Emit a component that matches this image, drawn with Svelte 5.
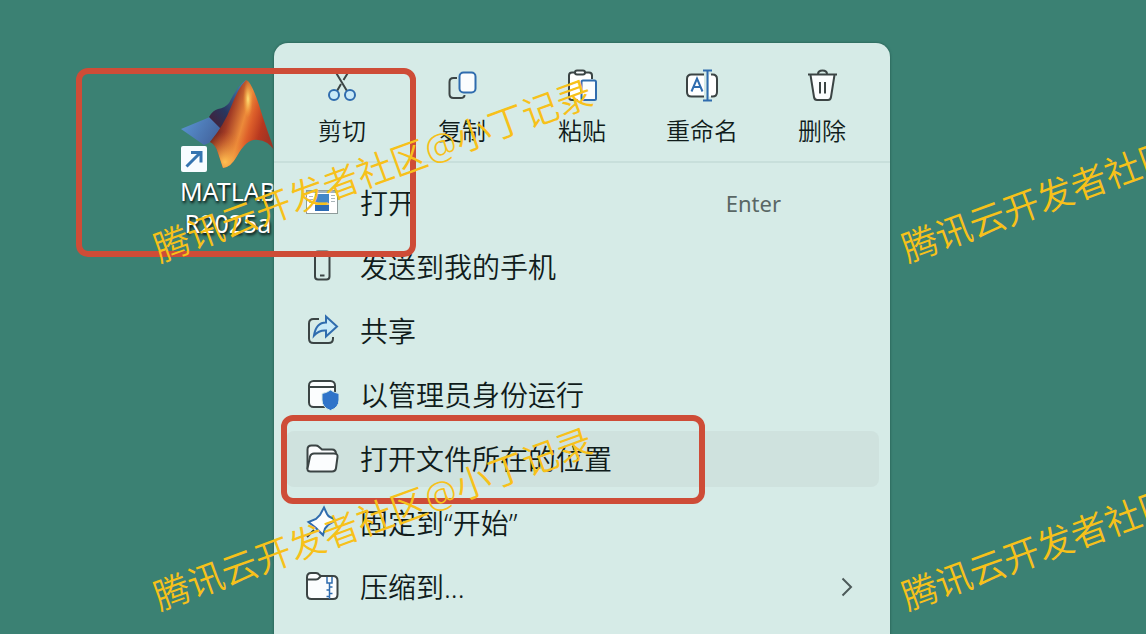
<script>
  const actions = [
    { id: 'cut', label: '剪切' },
    { id: 'copy', label: '复制' },
    { id: 'paste', label: '粘贴' },
    { id: 'rename', label: '重命名' },
    { id: 'delete', label: '删除' }
  ];
  const items = [
    { id: 'open', label: '打开', hint: 'Enter' },
    { id: 'phone', label: '发送到我的手机' },
    { id: 'share', label: '共享' },
    { id: 'admin', label: '以管理员身份运行' },
    { id: 'folder', label: '打开文件所在的位置', active: true },
    { id: 'pin', label: '固定到“开始”' },
    { id: 'zip', label: '压缩到...', submenu: true }
  ];
  const marks = [
    { x: 373, y: 171 },
    { x: 1121, y: 171 },
    { x: 373, y: 519 },
    { x: 1121, y: 519 }
  ];
</script>

{#snippet icon(id)}
  <svg class="icon" viewBox="0 0 36 36" aria-hidden="true">
    {#if id === 'cut'}
      <path d="M11 3 23 23M25 3 19.500 12M17 16 13 23" class="ink" />
      <circle cx="10" cy="27" r="5" class="blue pale" />
      <circle cx="26" cy="27" r="5" class="blue pale" />
    {:else if id === 'copy'}
      <path d="M13 10H9.500q-4 0-4 4v12q0 4 4 4h7q4 0 4-3" class="ink" />
      <rect x="15.500" y="4.500" width="16" height="20" rx="4" class="blue white" />
    {:else if id === 'paste'}
      <path d="M12 5H8.500Q5 5 5 8v22q0 3 3.500 3H27V9q0-4-4-4h-4z" fill="#fff" />
      <path d="M11 4.500H8q-3 0-3 3V29q0 3 3 3h6M21 4.500h4q3 0 3 3V11" class="ink" />
      <rect x="11" y="2.500" width="10" height="4" rx="2" class="ink white" />
      <rect x="17.500" y="12.500" width="14.500" height="19.500" rx="1.500" class="blue white" />
    {:else if id === 'rename'}
      <path d="M20 6.500H7.500q-4.500 0-4.500 4.500v13q0 4.500 4.500 4.500H20zM25 6.500h3.500q4.500 0 4.500 4.500v13q0 4.500-4.500 4.500H25z" fill="#fff" />
      <path d="M20 6.500H7.500Q3 6.500 3 11v13q0 4.500 4.500 4.500H20M27 6.500h1.500Q33 6.500 33 11v13q0 4.500-4.500 4.500H27" class="ink" />
      <path d="m7.500 23.500 5.500-13 5.500 13M9.500 19h7M19 2.500h9M23.500 2.500v30M19 32.500h9" class="blue" />
    {:else if id === 'delete'}
      <path d="m6.500 7 3.500 22q.5 3 3 3h11q2.500 0 3-3L30.500 7" class="ink white" />
      <path d="M4 6.500h29M14 6q0-3.500 4.500-3.500T23 6M16 14v11.500M21 14v11.500" class="ink" />
    {:else if id === 'open'}
      <rect x="2.500" y="5.500" width="31" height="23" fill="#fff" stroke="#8e9c9b" stroke-width="1" />
      <path d="M3 6h30v2H3z" fill="#a3b4bd" />
      <rect x="11" y="9" width="14" height="17" fill="#2d6cb5" />
      <path d="M11 9h14v9H11z" fill="#4387c8" />
      <path d="M11 18h14v2H11z" fill="#e9c36b" />
      <path d="M5 11.500h4M5 14.500h4M5 17.500h4M27 10.500h4M27 13.500h4M27 16.500h4" stroke="#a9b5b8" stroke-width="1" />
    {:else if id === 'phone'}
      <rect x="11" y="2.500" width="14.500" height="28" rx="3" class="ink" />
      <path d="M16 26.500h4.500" class="ink" />
    {:else if id === 'share'}
      <path d="M15 6H9.500Q5 6 5 10.500v15Q5 30 9.500 30h15q4.500 0 4.500-4.500V24" class="ink" />
      <path d="M22 3.500v6Q12 9.500 10 22.500q5-5.500 12-5v6L33 13.500z" class="blue pale" />
    {:else if id === 'admin'}
      <rect x="5" y="4" width="26" height="26" rx="4.500" class="ink white" />
      <path d="M5 10h26" class="ink" />
      <path d="M26.500 13q4 3 8.500 3.500V23q0 7.500-8.500 10.500Q18 30.500 18 23v-6.500q4.500-.5 8.500-3.500z" fill="#2f74c9" stroke="#d6ece8" stroke-width="1" />
    {:else if id === 'folder'}
      <path d="M3.500 28V8.500q0-4 4-4h4q2 0 3 1L18 8.500h10q4 0 4 4.500" class="ink white" />
      <path d="M10 12.500h20q4 0 3.500 3.500L32 27q-.5 3.500-4 3.500H6.500q-3.500 0-3-3L6 15.500q1-3 4-3z" class="ink white" />
    {:else if id === 'pin'}
      <path d="m20 2.500 3 6.500q1 2 3 3l6 3-8 5-3 3.500-2 6.500q-3-3-7-7L4.500 17 12 14l4-4z" class="blue white" />
      <path d="m10 25-7 7" class="ink" />
    {:else if id === 'zip'}
      <path d="M3 8.500Q3 4 7 4h5q2 0 3.500 2L17 7h12q4.500 0 4.500 4.500v14Q33.500 30 29 30H7.500Q3 30 3 25.500z" class="ink white" />
      <path d="M3 10.500h9q2 0 3-1.500l2-2" class="ink" />
      <path d="M23 8v6h5V8M25.500 14v16M25.500 18h3M25.500 21h-3M25.500 24.500h3M25.500 27.500h-3" class="blue zipper" />
    {/if}
  </svg>
{/snippet}

<main class="desktop">
  <button class="shortcut" type="button">
    <svg class="logo" viewBox="0 0 95 90" aria-hidden="true">
      <defs>
        <linearGradient id="wing" x1="0" y1="0" x2="1" y2="0.400">
          <stop offset="0" stop-color="#5b97d6" />
          <stop offset="1" stop-color="#44659f" />
        </linearGradient>
        <linearGradient id="shade" x1="0" y1="1" x2="1" y2="0">
          <stop offset="0" stop-color="#4a1c30" />
          <stop offset="0.400" stop-color="#28365f" />
          <stop offset="1" stop-color="#4a86bf" />
        </linearGradient>
        <linearGradient id="flame" gradientUnits="userSpaceOnUse" x1="38" y1="28" x2="92" y2="44">
          <stop offset="0" stop-color="#5d1a1c" />
          <stop offset="0.220" stop-color="#a03a25" />
          <stop offset="0.480" stop-color="#ec8a3a" />
          <stop offset="0.620" stop-color="#dd5f2a" />
          <stop offset="0.820" stop-color="#b8381f" />
          <stop offset="1" stop-color="#a03424" />
        </linearGradient>
        <radialGradient id="glow" gradientUnits="userSpaceOnUse" cx="44" cy="82" r="30">
          <stop offset="0" stop-color="#ffc052" />
          <stop offset="1" stop-color="#e5742b" stop-opacity="0" />
        </radialGradient>
        <radialGradient id="tip" gradientUnits="userSpaceOnUse" cx="0" cy="0" r="1" gradientTransform="translate(67 19) scale(5 19)">
          <stop offset="0" stop-color="#ffe47a" />
          <stop offset="1" stop-color="#f9a035" stop-opacity="0" />
        </radialGradient>
      </defs>
      <path d="M0 49 29 37 41 48 28 63 23 65Z" fill="url(#wing)" />
      <path d="M28 37q4-7 9-8 7-1 11-6Q57 5 65 0 62 15 53 32L40 49Z" fill="url(#shade)" />
      <path d="M65 0Q57 8 50 27 43 45 29 62q6 3 8 11l5 15q8-1 14-12 10-18 21-16 9 0 17 11Q86 51 78 25 70 1 65 0Z" fill="url(#flame)" />
      <path d="M65 0Q57 8 50 27 43 45 29 62q6 3 8 11l5 15q8-1 14-12 10-18 21-16 9 0 17 11Q86 51 78 25 70 1 65 0Z" fill="url(#glow)" />
      <ellipse cx="67" cy="19" rx="5" ry="18" fill="url(#tip)" />
    </svg>
    <svg class="arrow" viewBox="0 0 26 26" aria-hidden="true">
      <rect width="26" height="26" rx="2" fill="#f7fcff" />
      <path d="M5.500 20.500 19 7M10 6.500h10v10" fill="none" stroke="#3474b0" stroke-width="3" />
    </svg>
    <span>MATLAB<br />R2025a</span>
  </button>

  <section class="menu">
    <div class="actions">
      {#each actions as action}
        <button type="button">
          {@render icon(action.id)}
          <span>{action.label}</span>
        </button>
      {/each}
    </div>
    <div class="items">
      {#each items as item}
        <button type="button" class:active={item.active}>
          {@render icon(item.id)}
          <span class="label">{item.label}</span>
          {#if item.hint}<kbd>{item.hint}</kbd>{/if}
          {#if item.submenu}
            <svg class="chevron" viewBox="0 0 12 20" aria-hidden="true"><path d="m1.500 1.500 8.500 8.500-8.500 8.500" /></svg>
          {/if}
        </button>
      {/each}
    </div>
  </section>

  <div class="frame shortcut-frame"></div>
  <div class="frame item-frame"></div>

  {#each marks as mark}
    <div class="mark" style="left:{mark.x}px;top:{mark.y}px">腾讯云开发者社区@小丁记录</div>
  {/each}
</main>

<style>
  :global(body) {
    margin: 0;
  }
  .desktop {
    position: relative;
    box-sizing: border-box;
    height: 100vh;
    min-height: 480px;
    padding: 43px 256px 0 274px;
    overflow: hidden;
    background: #3b8173;
    font-family: 'Noto Sans', 'Noto Sans CJK SC', sans-serif;
  }
  button {
    padding: 0;
    border: 0;
    background: none;
    color: #101c1b;
    font: inherit;
  }
  .shortcut {
    position: absolute;
    left: 168px;
    top: 80px;
    width: 120px;
    color: #fff;
    font-size: 25px;
    line-height: 32px;
    text-shadow: 1px 2px 3px #000;
  }
  .logo {
    display: block;
    width: 95px;
    height: 90px;
    margin: 0 auto 5px;
  }
  .arrow {
    position: absolute;
    left: 13px;
    top: 66px;
    width: 26px;
    height: 26px;
  }
  .menu {
    position: relative;
    box-sizing: border-box;
    height: 100%;
    min-height: 600px;
    border-radius: 14px 14px 0 0;
    background: #d6ebe7;
    box-shadow: 0 0 2px 1px #2f6c60;
  }
  .actions {
    display: grid;
    grid-template-columns: repeat(5, 1fr);
    height: 118px;
    padding: 0 8px;
    border-bottom: 2px solid #c8dfdb;
  }
  .actions button {
    display: flex;
    flex-direction: column;
    align-items: center;
    gap: 9px;
    padding-top: 25px;
    font-size: 24px;
    line-height: 36px;
    font-weight: 350;
  }
  .icon {
    flex: none;
    width: 36px;
    height: 36px;
    fill: none;
    stroke-width: 2;
  }
  .ink {
    stroke: #3b4444;
  }
  .blue {
    stroke: #2f6cae;
  }
  .zipper {
    stroke-width: 1.5;
  }
  .white {
    fill: #fbfdfe;
  }
  .pale {
    fill: #c9eaf8;
  }
  .items {
    display: grid;
    gap: 8px;
    padding: 12px 11px 12px 12px;
  }
  .items button {
    display: flex;
    align-items: center;
    gap: 20px;
    height: 56px;
    padding: 0 18px;
    border-radius: 8px;
    font-size: 28px;
    line-height: 40px;
    font-weight: 350;
    text-align: left;
  }
  .items .active {
    background: #cfe2de;
  }
  .label {
    flex: 1;
  }
  kbd {
    margin-right: 80px;
    color: #596765;
    font: 400 22px/32px 'Noto Sans', sans-serif;
  }
  .chevron {
    width: 12px;
    height: 20px;
    margin-right: 8px;
    fill: none;
    stroke: #4d5a59;
    stroke-width: 2;
  }
  .frame {
    position: absolute;
    box-sizing: border-box;
    border: 6px solid #ce4c37;
    border-radius: 12px;
    pointer-events: none;
  }
  .shortcut-frame {
    left: 76px;
    top: 68px;
    width: 340px;
    height: 189px;
  }
  .item-frame {
    left: 281px;
    top: 415px;
    width: 424px;
    height: 89px;
  }
  .mark {
    position: absolute;
    color: #f7c11a;
    font-size: 36px;
    line-height: 40px;
    font-weight: 350;
    white-space: nowrap;
    transform: translate(-50%, -50%) rotate(-20deg);
    pointer-events: none;
  }
</style>
